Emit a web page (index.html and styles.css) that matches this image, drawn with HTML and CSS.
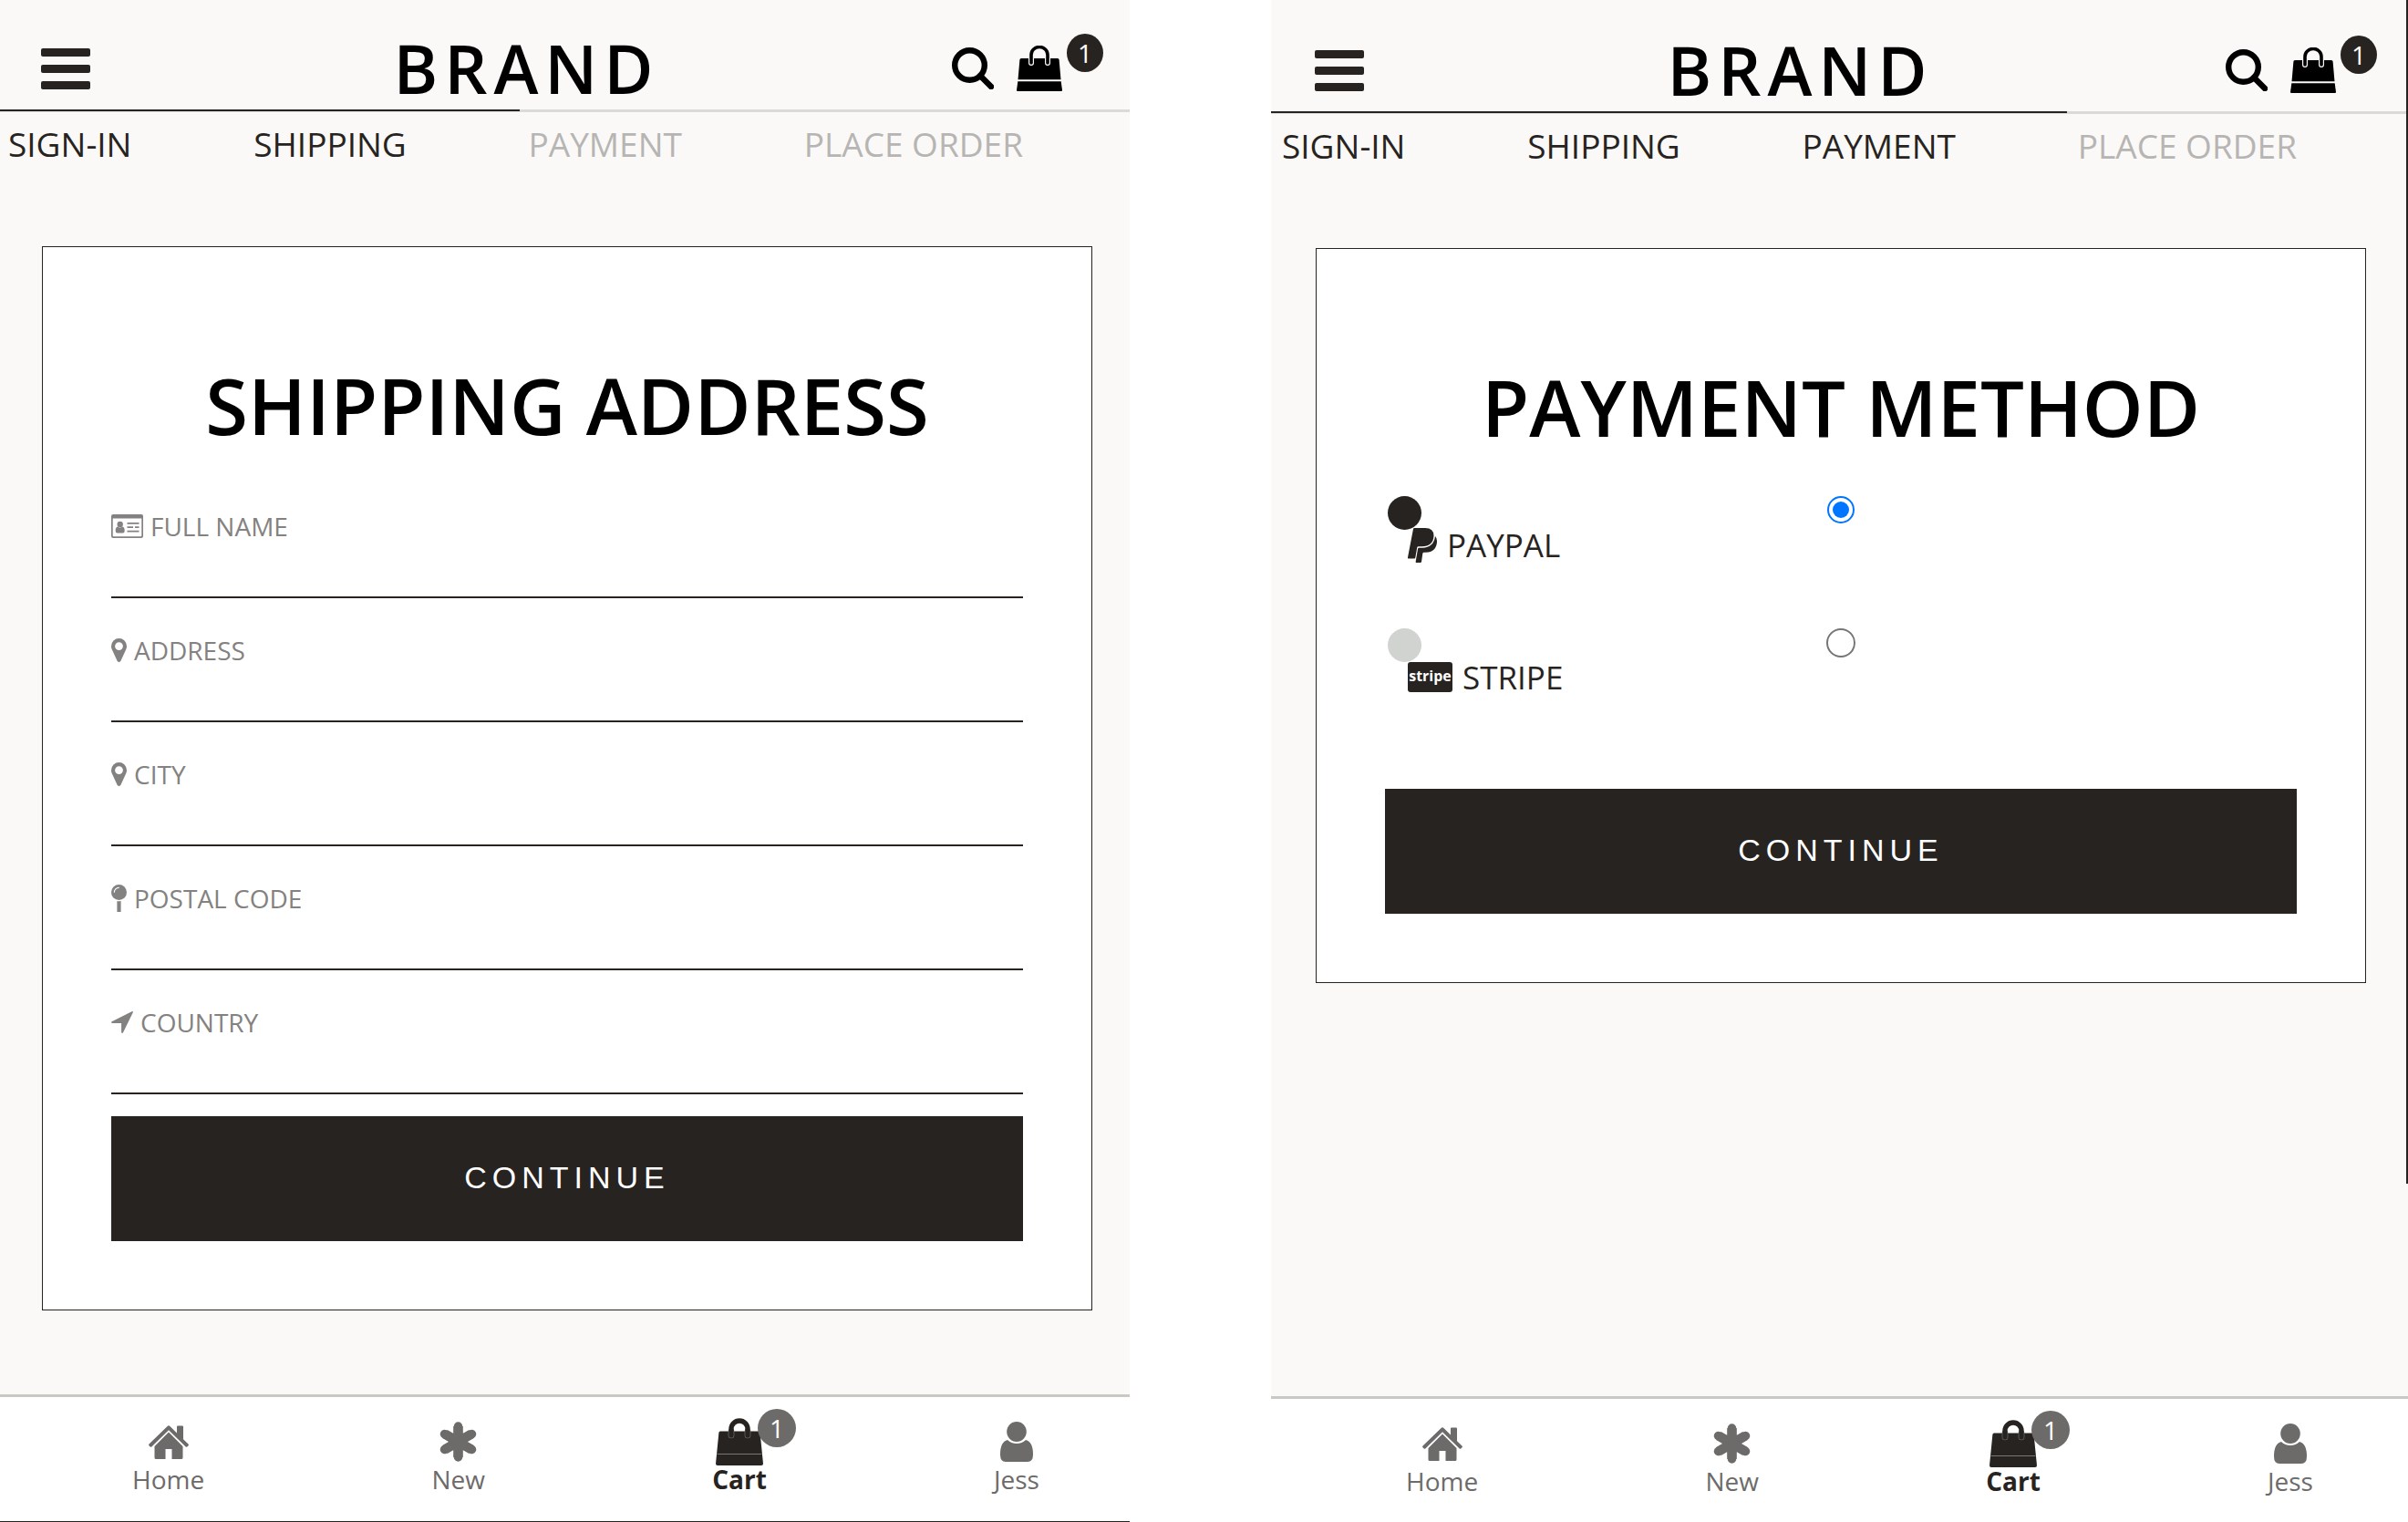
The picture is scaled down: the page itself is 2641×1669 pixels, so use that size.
FILE: index.html
```html
<!DOCTYPE html>
<html lang="en">
<head>
<meta charset="utf-8">
<title>Checkout</title>
<link rel="stylesheet" href="styles.css">
</head>
<body>
<svg class="sprite" aria-hidden="true">
  <symbol id="i-menu" viewBox="0 0 54 45"><rect width="54" height="9" rx="2"/><rect y="18" width="54" height="9" rx="2"/><rect y="36" width="54" height="9" rx="2"/></symbol>
  <symbol id="i-search" viewBox="0 0 46 46"><circle cx="19.500" cy="19.500" r="16.300" fill="none" stroke="currentColor" stroke-width="6.400"/><path d="M31 31l12 12" fill="none" stroke="currentColor" stroke-width="6.500" stroke-linecap="round"/></symbol>
  <symbol id="i-bag" viewBox="0 0 50 50"><path d="M5 14h40q1.500 0 1.600 1.500L48.500 37.200h-47L3.400 15.500Q3.500 14 5 14z"/><path d="M1.300 39.200h47.400L50 49q0 1-1 1H1q-1 0-1-1z"/><path d="M16 19V10a9 8.500 0 0 1 18 0v9" fill="none" stroke="#faf9f7" stroke-width="6" stroke-linecap="round"/><path d="M16 19V10a9 8.500 0 0 1 18 0v9" fill="none" stroke="currentColor" stroke-width="3.600" stroke-linecap="round"/></symbol>
  <symbol id="i-bag-tall" viewBox="0 0 52 52"><path d="M5 14.500h42q1.500 0 1.600 1.500L52 50q0 2-2 2H2q-2 0-2-2L3.400 16q.1-1.500 1.600-1.500z"/><path d="M1.500 39.500h49" stroke="#777" stroke-width="1"/><path d="M17 14.500V19m18-4.500V19" stroke="#777" stroke-width="6.600" stroke-linecap="round"/><path d="M17 19V12a9 9 0 0 1 18 0v7" fill="none" stroke="currentColor" stroke-width="5.400" stroke-linecap="round"/></symbol>
  <symbol id="i-card" viewBox="0 0 35 26"><path fill-rule="evenodd" d="M2 0h31q2 0 2 2v22q0 2-2 2H2q-2 0-2-2V2Q0 0 2 0zM1.700 4.500V23.300q0 1 1 1h29.600q1 0 1-1V4.500z"/><circle cx="9.700" cy="11" r="3.200"/><path d="M7 13.500q2.700 2 5.400 0 2.300.6 2.300 4.500 0 2.500-2 2.500h-6q-2 0-2-2.500 0-3.900 2.300-4.500zM17.500 9H30.500v1.800h-13zM17.500 13.300H24v1.800h-6.500zM26 13.300h4.500v1.800H26zM17.500 17.800h13v1.800h-13z"/></symbol>
  <symbol id="i-pin" viewBox="0 0 17 26"><path fill-rule="evenodd" d="M8.500 0A8.500 8.500 0 0 1 17 8.500q0 2-.6 3.300L10.300 24.900q-1.800 2.200-3.600 0L.6 11.800Q0 10.500 0 8.500A8.500 8.500 0 0 1 8.500 0zm0 4.200a4.400 4.400 0 1 0 0 8.800 4.400 4.400 0 0 0 0-8.800z"/></symbol>
  <symbol id="i-post" viewBox="0 0 17 30"><circle cx="8.500" cy="8.500" r="8.500"/><path d="M3.300 8.800A5.300 5.300 0 0 1 8.700 3.300" fill="none" stroke="#fff" stroke-width="1.200"/><path d="M6.400 18q2.100.5 4.200 0v12H6.400z"/></symbol>
  <symbol id="i-arrow" viewBox="0 0 24 24"><path d="M22.500.2q1.700-.6 1.300 1L13 23.200q-.5.900-1.300.6-.6-.2-.6-1V12.900H1q-1 0-1-.8 0-.6.600-.9z"/></symbol>
  <symbol id="i-home" viewBox="0 0 44 37"><path d="M22 7.500 37.500 23v12.500q0 1.500-1.500 1.500H25.500V26h-7v11H8q-1.500 0-1.500-1.500V23z"/><path d="M20.600 1q1.400-1.300 2.800 0L31 8.600V1.500Q31 .500 32 .500h5q1 0 1 1v13.800l5.500 5.300q.8.900 0 1.700l-1.200 1.200q-.8.700-1.600 0L22 5.300 3.300 23.500q-.8.700-1.600 0L.5 22.300q-.8-.8 0-1.700z"/></symbol>
  <symbol id="i-new" viewBox="0 0 41 44"><path d="M20.500 5v34M6 13.500l29 17M35 13.500l-29 17" stroke="currentColor" stroke-width="10.500" stroke-linejoin="round"/><path d="M20.500 5v34M5.500 13.500l30 17M35.500 13.500l-30 17" stroke="currentColor" stroke-width="9.500" stroke-linecap="round"/></symbol>
  <symbol id="i-user" viewBox="0 0 36 44"><ellipse cx="18" cy="11" rx="10.800" ry="11"/><path d="M8 20q4 4 10 4t10-4q8 2 8 16 0 8-6 8H6q-6 0-6-8Q0 22 8 20z"/></symbol>
  <symbol id="i-paypal" viewBox="0 0 32 38"><path d="M6 1Q6.200 0 7.200 0H19q9.500 0 9.500 8.500Q28 20 15.500 20.300H11.700Q10.500 20.300 10.200 21.600L8.300 32.500Q8.200 33.500 7.200 33.500H1q-1.200 0-1-1.200z"/><path d="M30 9q2.200 2 2 6.500Q31 26.500 20 26.700h-2.200q-1.200 0-1.500 1.300L15 37q-.2 1-1.200 1H9.500q-1 0-.8-1.200L11 23q.2-1.200 1.300-1.200H16Q28.500 21.300 30 9z"/></symbol>
</svg>

<div class="screens">
  <section class="screen screen-shipping">
    <header class="topbar">
      <button class="icon-btn" aria-label="Menu"><svg class="ic-menu"><use href="#i-menu"/></svg></button>
      <a class="brand" href="#">BRAND</a>
      <div class="tools">
        <button class="icon-btn" aria-label="Search"><svg class="ic-search"><use href="#i-search"/></svg></button>
        <a class="bag-link" href="#" aria-label="Cart"><svg class="ic-bag"><use href="#i-bag"/></svg><span class="badge">1</span></a>
      </div>
    </header>
    <div class="progress"><div class="progress-fill" style="width:46%"></div></div>
    <nav class="steps"><a href="#">SIGN-IN</a><a href="#">SHIPPING</a><a class="todo" href="#">PAYMENT</a><a class="todo" href="#">PLACE ORDER</a></nav>
    <main class="card">
      <h1>SHIPPING ADDRESS</h1>
      <form>
        <div class="field"><label for="name"><svg class="ic-card"><use href="#i-card"/></svg>FULL NAME</label><input id="name" type="text"></div>
        <div class="field"><label for="address"><svg class="ic-pin"><use href="#i-pin"/></svg>ADDRESS</label><input id="address" type="text"></div>
        <div class="field"><label for="city"><svg class="ic-pin"><use href="#i-pin"/></svg>CITY</label><input id="city" type="text"></div>
        <div class="field"><label for="postal"><svg class="ic-post"><use href="#i-post"/></svg>POSTAL CODE</label><input id="postal" type="text"></div>
        <div class="field"><label for="country"><svg class="ic-arrow"><use href="#i-arrow"/></svg>COUNTRY</label><input id="country" type="text"></div>
        <button class="continue" type="button">CONTINUE</button>
      </form>
    </main>
    <nav class="tabbar">
      <a href="#"><span class="tab-icon"><svg class="ic-home"><use href="#i-home"/></svg></span>Home</a>
      <a href="#"><span class="tab-icon"><svg class="ic-new"><use href="#i-new"/></svg></span>New</a>
      <a class="current" href="#"><span class="tab-icon"><svg class="ic-bag-tall"><use href="#i-bag-tall"/></svg><span class="badge tab-badge">1</span></span>Cart</a>
      <a href="#"><span class="tab-icon"><svg class="ic-user"><use href="#i-user"/></svg></span>Jess</a>
    </nav>
  </section>

  <section class="screen screen-payment">
    <header class="topbar">
      <button class="icon-btn" aria-label="Menu"><svg class="ic-menu"><use href="#i-menu"/></svg></button>
      <a class="brand" href="#">BRAND</a>
      <div class="tools">
        <button class="icon-btn" aria-label="Search"><svg class="ic-search"><use href="#i-search"/></svg></button>
        <a class="bag-link" href="#" aria-label="Cart"><svg class="ic-bag"><use href="#i-bag"/></svg><span class="badge">1</span></a>
      </div>
    </header>
    <div class="progress"><div class="progress-fill" style="width:70%"></div></div>
    <nav class="steps"><a href="#">SIGN-IN</a><a href="#">SHIPPING</a><a href="#">PAYMENT</a><a class="todo" href="#">PLACE ORDER</a></nav>
    <main class="card">
      <h1>PAYMENT METHOD</h1>
      <form>
        <div class="options">
          <div class="option">
            <label for="paypal"><span class="dot dot-on"></span><span class="method"><svg class="ic-paypal"><use href="#i-paypal"/></svg>PAYPAL</span></label>
            <input id="paypal" type="radio" name="method" checked>
          </div>
          <div class="option">
            <label for="stripe"><span class="dot"></span><span class="method"><span class="stripe-mark">stripe</span>STRIPE</span></label>
            <input id="stripe" type="radio" name="method">
          </div>
        </div>
        <button class="continue" type="button">CONTINUE</button>
      </form>
    </main>
    <nav class="tabbar">
      <a href="#"><span class="tab-icon"><svg class="ic-home"><use href="#i-home"/></svg></span>Home</a>
      <a href="#"><span class="tab-icon"><svg class="ic-new"><use href="#i-new"/></svg></span>New</a>
      <a class="current" href="#"><span class="tab-icon"><svg class="ic-bag-tall"><use href="#i-bag-tall"/></svg><span class="badge tab-badge">1</span></span>Cart</a>
      <a href="#"><span class="tab-icon"><svg class="ic-user"><use href="#i-user"/></svg></span>Jess</a>
    </nav>
  </section>
</div>
</body>
</html>
```
FILE: styles.css
```css
* { box-sizing: border-box; }

body {
  margin: 0;
  background: #fff;
  color: #272320;
  font-family: "Trebuchet MS", "Open Sans", sans-serif;
}

a { color: inherit; text-decoration: none; }
svg { display: block; fill: currentColor; flex: none; }
.sprite { position: absolute; width: 0; height: 0; }

.screens {
  display: grid;
  grid-template-columns: 1239fr 1247fr;
  column-gap: 155px;
  min-height: 100vh;
}

.screen {
  --edge: 45px;
  --end: 29px;
  --steps-start: 9px;
  --inset-end: 117px;
  --card-end: 41px;
  --tabs-start: 145px;
  --tabs-end: 99px;
  display: flex;
  flex-direction: column;
  background: #faf9f7;
}
.screen-payment {
  --edge: 48px;
  --end: 34px;
  --steps-start: 12px;
  --inset-end: 122px;
  --card-end: 46px;
  --tabs-start: 148px;
  --tabs-end: 104px;
  position: relative;
  padding-top: 2px;
}
.screen-payment::after {
  content: "";
  position: absolute;
  top: 0;
  right: 0;
  width: 2px;
  height: 1298px;
  background: #272320;
}

/* Header */
.topbar {
  display: flex;
  align-items: center;
  justify-content: space-between;
  height: 120px;
  padding: 30px var(--end) 0 var(--edge);
}
.icon-btn { padding: 0; border: 0; background: none; color: #000; }
.ic-menu { width: 54px; height: 45px; color: #272320; }
.brand {
  padding-left: 12px;
  color: #000;
  font-size: 74px;
  font-weight: 600;
  line-height: 80px;
  letter-spacing: 7px;
}
.tools { display: flex; align-items: center; gap: 25px; color: #000; }
.ic-search { width: 46px; height: 46px; }
.ic-bag { width: 50px; height: 50px; }
.bag-link { display: flex; align-items: center; gap: 5px; }
.badge {
  width: 40px;
  height: 42px;
  border-radius: 50%;
  background: #272320;
  color: #fff;
  font-size: 28px;
  font-weight: 400;
  line-height: 42px;
  text-align: center;
}
.bag-link .badge { margin-bottom: 34px; }

.progress { height: 3px; background: #dcdad7; }
.progress-fill { height: 2px; background: #272320; }

.steps {
  display: flex;
  justify-content: space-between;
  padding: 10px var(--inset-end) 0 var(--steps-start);
  font-size: 37px;
  line-height: 50px;
}
.todo { color: #b7b5b3; }

/* Card */
.card {
  margin: 87px var(--card-end) 40px calc(var(--edge) + 1px);
  padding: 113px 75px 75px;
  border: 1px solid #272320;
  background: #fff;
}
h1 {
  margin: 0 0 16px;
  color: #000;
  font-size: 85px;
  font-weight: 600;
  line-height: 120px;
  text-align: center;
}
.field { padding-top: 37px; }
.field label {
  display: flex;
  align-items: center;
  gap: 8px;
  height: 40px;
  color: #848280;
  font-size: 28px;
  line-height: 40px;
}
.field input {
  display: block;
  width: 100%;
  height: 59px;
  padding: 0;
  border: 0;
  border-bottom: 2px solid #272320;
  background: none;
  font: inherit;
  font-size: 28px;
}
.ic-card { width: 35px; height: 26px; }
.ic-pin { width: 17px; height: 26px; }
.ic-post { width: 17px; height: 30px; }
.ic-arrow { width: 24px; height: 24px; }

.continue {
  display: block;
  width: 100%;
  height: 137px;
  margin-top: 24px;
  padding-bottom: 3px;
  border: 0;
  background: #272320;
  color: #fff;
  font-family: "Liberation Sans", Arial, sans-serif;
  font-size: 34px;
  letter-spacing: 6px;
}

.options { padding-top: 22px; padding-bottom: 7px; }
.option {
  display: grid;
  grid-template-columns: 1fr auto 1fr;
  align-items: start;
  height: 145px;
}
.option label { padding-left: 3px; }
.option input {
  appearance: none;
  width: 32px;
  height: 32px;
  margin: 0;
  border: 2px solid #767676;
  border-radius: 50%;
  background: #fff;
}
.option input:checked {
  width: 30px;
  height: 30px;
  padding: 4px;
  border-color: #0075ff;
  background: #0075ff content-box;
}
.dot {
  display: block;
  width: 37px;
  height: 37px;
  border-radius: 50%;
  background: #d1d3d0;
}
.dot-on { background: #272320; }
.method {
  display: flex;
  align-items: center;
  gap: 11px;
  height: 33px;
  padding-left: 22px;
  font-size: 35px;
}
.ic-paypal { width: 32px; height: 38px; }
.stripe-mark {
  width: 49px;
  height: 33px;
  border-radius: 3px;
  background: #272320;
  color: #fff;
  font-size: 16px;
  font-weight: 700;
  line-height: 30px;
  text-align: center;
}

/* Bottom tabs */
.tabbar {
  display: flex;
  justify-content: space-between;
  margin-top: auto;
  padding: 27px var(--tabs-end) 27px var(--tabs-start);
  border-top: 3px solid #c8c8c4;
  border-bottom: 1px solid #272320;
  background: #fff;
  color: #6d6b69;
  font-size: 28px;
  line-height: 38px;
}
.screen-payment .tabbar { padding-bottom: 26px; border-bottom: 0; }
.tabbar a { display: flex; flex-direction: column; align-items: center; }
.tab-icon {
  position: relative;
  display: flex;
  align-items: center;
  justify-content: center;
  height: 44px;
}
.current { color: #272320; font-weight: 700; }
.ic-home { width: 44px; height: 37px; }
.ic-new { width: 41px; height: 44px; }
.ic-user { width: 36px; height: 44px; }
.ic-bag-tall { width: 52px; height: 52px; }
.tab-badge {
  position: absolute;
  top: -14px;
  left: 46px;
  width: 42px;
  background: #6d6b69;
}
```
